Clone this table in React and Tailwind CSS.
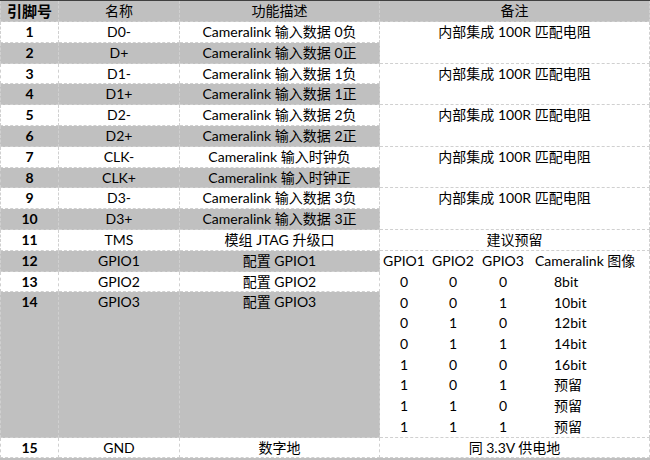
import React from 'react';

const NOTE = '内部集成 100R 匹配电阻';

const pins = [
  { no: '1', name: 'D0-', desc: 'Cameralink 输入数据 0负', note: NOTE },
  { no: '2', name: 'D+', desc: 'Cameralink 输入数据 0正' },
  { no: '3', name: 'D1-', desc: 'Cameralink 输入数据 1负', note: NOTE },
  { no: '4', name: 'D1+', desc: 'Cameralink 输入数据 1正' },
  { no: '5', name: 'D2-', desc: 'Cameralink 输入数据 2负', note: NOTE },
  { no: '6', name: 'D2+', desc: 'Cameralink 输入数据 2正' },
  { no: '7', name: 'CLK-', desc: 'Cameralink 输入时钟负', note: NOTE },
  { no: '8', name: 'CLK+', desc: 'Cameralink 输入时钟正' },
  { no: '9', name: 'D3-', desc: 'Cameralink 输入数据 3负', note: NOTE },
  { no: '10', name: 'D3+', desc: 'Cameralink 输入数据 3正' },
];

const modes = [
  ['0', '0', '0', '8bit'],
  ['0', '0', '1', '10bit'],
  ['0', '1', '0', '12bit'],
  ['0', '1', '1', '14bit'],
  ['1', '0', '0', '16bit'],
  ['1', '0', '1', '预留'],
  ['1', '1', '0', '预留'],
  ['1', '1', '1', '预留'],
];

const cell = 'border-r border-b border-dashed border-[#d0d0d0] flex justify-center leading-none';
const gray = 'bg-[#c0c0c0]';

const Cell = ({ children, className = '', top = false }) => (
  <div className={`${cell} ${top ? 'items-start' : 'items-center'} ${className}`}>
    {top ? <div className="h-[20px] flex items-center">{children}</div> : children}
  </div>
);

export default function App() {
  return (
    <div className="w-[650px] h-[460px] bg-white text-black text-[14px] font-[Lato,'Noto_Sans_CJK_SC',sans-serif] overflow-hidden">
      <div className="border-t border-[#404040]">
        <div className="grid grid-cols-[59px_121px_200px_270px] grid-rows-[21px_21px_21px_20px_21px_21px_21px_21px_20px_21px_21px_21px_21px_20px_146px_20px]">
          {/* header */}
          <Cell className={`${gray} border-l font-bold text-[15px]`}>引脚号</Cell>
          <Cell className={gray}>名称</Cell>
          <Cell className={gray}>功能描述</Cell>
          <Cell className={gray}>备注</Cell>

          {/* differential pairs */}
          {pins.map((p, i) => {
            const bg = i % 2 ? gray : 'bg-white';
            return (
              <React.Fragment key={p.no}>
                <Cell className={`${bg} border-l font-bold`}>{p.no}</Cell>
                <Cell className={bg}>{p.name}</Cell>
                <Cell className={bg}>{p.desc}</Cell>
                {p.note && (
                  <Cell top className="row-span-2 bg-white">
                    {p.note}
                  </Cell>
                )}
              </React.Fragment>
            );
          })}

          {/* TMS */}
          <Cell className="border-l font-bold">11</Cell>
          <Cell>TMS</Cell>
          <Cell>模组 JTAG 升级口</Cell>
          <Cell>建议预留</Cell>

          {/* GPIO */}
          <Cell className={`${gray} border-l font-bold`}>12</Cell>
          <Cell className={gray}>GPIO1</Cell>
          <Cell className={gray}>配置 GPIO1</Cell>
          <div className="row-span-3 bg-white border-r border-b border-dashed border-[#d0d0d0] flex flex-col leading-none">
            <div className="flex-1 grid grid-cols-[48px_50px_50px_1fr] items-center">
              <span className="text-center">GPIO1</span>
              <span className="text-center">GPIO2</span>
              <span className="text-center">GPIO3</span>
              <span className="pl-[7px]">Cameralink 图像</span>
            </div>
            {modes.map((m, i) => (
              <div key={i} className="flex-1 grid grid-cols-[48px_50px_50px_1fr] items-center">
                <span className="text-center">{m[0]}</span>
                <span className="text-center">{m[1]}</span>
                <span className="text-center">{m[2]}</span>
                <span className="pl-[26px]">{m[3]}</span>
              </div>
            ))}
          </div>

          <Cell className="border-l font-bold">13</Cell>
          <Cell>GPIO2</Cell>
          <Cell>配置 GPIO2</Cell>

          <Cell top className={`${gray} border-l font-bold`}>14</Cell>
          <Cell top className={gray}>GPIO3</Cell>
          <Cell top className={gray}>配置 GPIO3</Cell>

          {/* GND */}
          <Cell className="border-l font-bold">15</Cell>
          <Cell>GND</Cell>
          <Cell>数字地</Cell>
          <Cell>同 3.3V 供电地</Cell>
        </div>
        <div className={`h-[2px] ${gray}`} />
      </div>
    </div>
  );
}
